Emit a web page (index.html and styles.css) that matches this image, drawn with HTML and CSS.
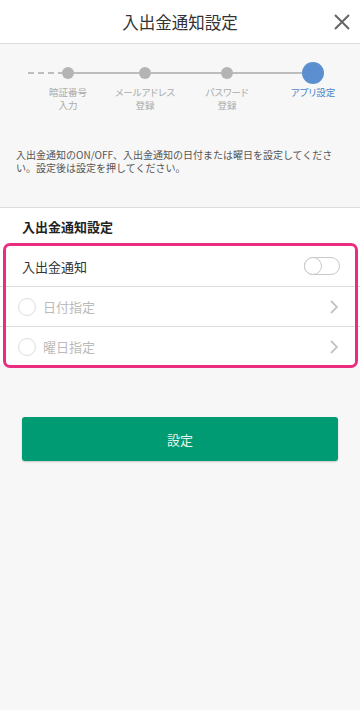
FILE: index.html
```html
<!DOCTYPE html>
<html lang="ja">
<head>
    <meta charset="UTF-8">
    <meta name="viewport" content="width=device-width, initial-scale=1.0">
    <title>入出金通知設定</title>
    <link rel="stylesheet" href="styles.css">
</head>
<body>
    <div class="header">
        <h1>入出金通知設定</h1>
        <span class="close">
            <svg width="16" height="16" viewBox="0 0 16 16"><path d="M1 1L15 15M15 1L1 15" stroke="#666" stroke-width="2" fill="none"/></svg>
        </span>
    </div>

    <div class="stepper">
        <div class="dash"></div>
        <div class="step">
            <div class="dot-box"><span class="dot"></span></div>
            <div class="step-label">暗証番号<br>入力</div>
        </div>
        <div class="line line-1"></div>
        <div class="step">
            <div class="dot-box"><span class="dot"></span></div>
            <div class="step-label">メールアドレス<br>登録</div>
        </div>
        <div class="line line-2"></div>
        <div class="step">
            <div class="dot-box"><span class="dot"></span></div>
            <div class="step-label">パスワード<br>登録</div>
        </div>
        <div class="line line-3"></div>
        <div class="step current">
            <div class="dot-box"><span class="dot"></span></div>
            <div class="step-label">アプリ設定</div>
        </div>
    </div>

    <p class="desc">入出金通知のON/OFF、入出金通知の日付または曜日を設定してください。設定後は設定を押してください。</p>

    <div class="section">
        <h2>入出金通知設定</h2>
        <div class="list">
            <div class="row">
                <span class="row-text">入出金通知</span>
                <span class="toggle"><span class="knob"></span></span>
            </div>
            <div class="row disabled">
                <span class="radio"></span>
                <span class="row-text">日付指定</span>
                <svg class="chev" width="10" height="16" viewBox="0 0 10 16"><path d="M2 2L8 8L2 14" stroke="#c4c4c4" stroke-width="1.8" fill="none"/></svg>
            </div>
            <div class="row disabled">
                <span class="radio"></span>
                <span class="row-text">曜日指定</span>
                <svg class="chev" width="10" height="16" viewBox="0 0 10 16"><path d="M2 2L8 8L2 14" stroke="#c4c4c4" stroke-width="1.8" fill="none"/></svg>
            </div>
        </div>
    </div>

    <div class="actions">
        <button class="submit">設定</button>
    </div>
</body>
</html>
```
FILE: styles.css
```css
html, body {
    margin: 0;
    padding: 0;
    height: 100%;
    font-family: "Noto Sans CJK JP", "Noto Sans", sans-serif;
    background-color: #f7f7f7;
    color: #333;
}
.header {
    height: 43px;
    background-color: #fff;
    border-bottom: 1px solid #dcdcdc;
    display: flex;
    align-items: center;
    justify-content: center;
    position: relative;
}
.header h1 {
    margin: 0;
    font-size: 16.5px;
    font-weight: normal;
    color: #333;
}
.close {
    position: absolute;
    right: 10px;
    top: 14px;
    width: 16px;
    height: 16px;
}
.close svg {
    display: block;
}
.stepper {
    display: flex;
    align-items: flex-start;
    padding: 18px 0 0 28px;
    height: 55px;
}
.dash {
    width: 34px;
    height: 2px;
    margin-top: 10px;
    background: repeating-linear-gradient(90deg, #bdbdbd 0 6px, transparent 6px 10px);
}
.line {
    height: 2px;
    margin-top: 10px;
    background-color: #bdbdbd;
}
.line-1 {
    width: 65px;
}
.line-2 {
    width: 70px;
}
.line-3 {
    width: 69px;
}
.step {
    width: 12px;
    display: flex;
    flex-direction: column;
    align-items: center;
}
.step.current {
    width: 22px;
}
.dot-box {
    height: 22px;
    display: flex;
    align-items: center;
}
.dot {
    width: 12px;
    height: 12px;
    border-radius: 50%;
    background-color: #b4b4b4;
}
.current .dot {
    width: 22px;
    height: 22px;
    background-color: #5b8fcf;
}
.step-label {
    margin-top: 2px;
    white-space: nowrap;
    text-align: center;
    font-size: 9.5px;
    line-height: 12.5px;
    color: #aaa;
    font-feature-settings: "palt";
}
.current .step-label {
    color: #4a86c8;
}
.desc {
    margin: 31px 16px 0 16px;
    font-size: 10px;
    line-height: 13px;
    color: #555;
    height: 59px;
}
.section {
    background-color: #fff;
    border-top: 1px solid #dcdcdc;
}
.section h2 {
    margin: 0;
    padding: 11px 22px 9px;
    font-size: 13px;
    line-height: 16px;
    font-weight: bold;
    color: #222;
}
.list {
    position: relative;
    margin-top: 2px;
}
.list::after {
    content: "";
    position: absolute;
    top: -3px;
    left: 3px;
    right: 2px;
    bottom: -2px;
    border: 3px solid #ea2d7e;
    border-radius: 7px;
    pointer-events: none;
}
.row {
    display: flex;
    align-items: center;
    height: 39px;
    padding: 0 21px 0 18px;
    border-bottom: 1px solid #dcdcdc;
}
.row:first-child {
    height: 40px;
    padding-left: 22px;
}
.row:last-child {
    border-bottom: none;
}
.row-text {
    flex: 1;
    font-size: 13px;
    color: #333;
}
.disabled .row-text {
    color: #bbb;
}
.radio {
    width: 16px;
    height: 16px;
    border: 1px solid #dedede;
    border-radius: 50%;
    margin-right: 7px;
}
.toggle {
    width: 34px;
    height: 16px;
    border: 1px solid #c8c8c8;
    border-radius: 9px;
    display: flex;
    align-items: center;
    margin-right: -1px;
}
.knob {
    width: 16px;
    height: 16px;
    border-radius: 50%;
    border: 1px solid #c8c8c8;
    margin-left: -1px;
    background-color: #fff;
}
.chev {
    display: block;
}
.actions {
    padding: 51px 22px 0;
}
.submit {
    width: 100%;
    height: 44px;
    border: none;
    border-radius: 3px;
    background-color: #009b72;
    color: #e6f5ef;
    font-family: inherit;
    font-size: 13px;
    box-shadow: 0 1px 2px rgba(0, 0, 0, 0.2);
}
```
